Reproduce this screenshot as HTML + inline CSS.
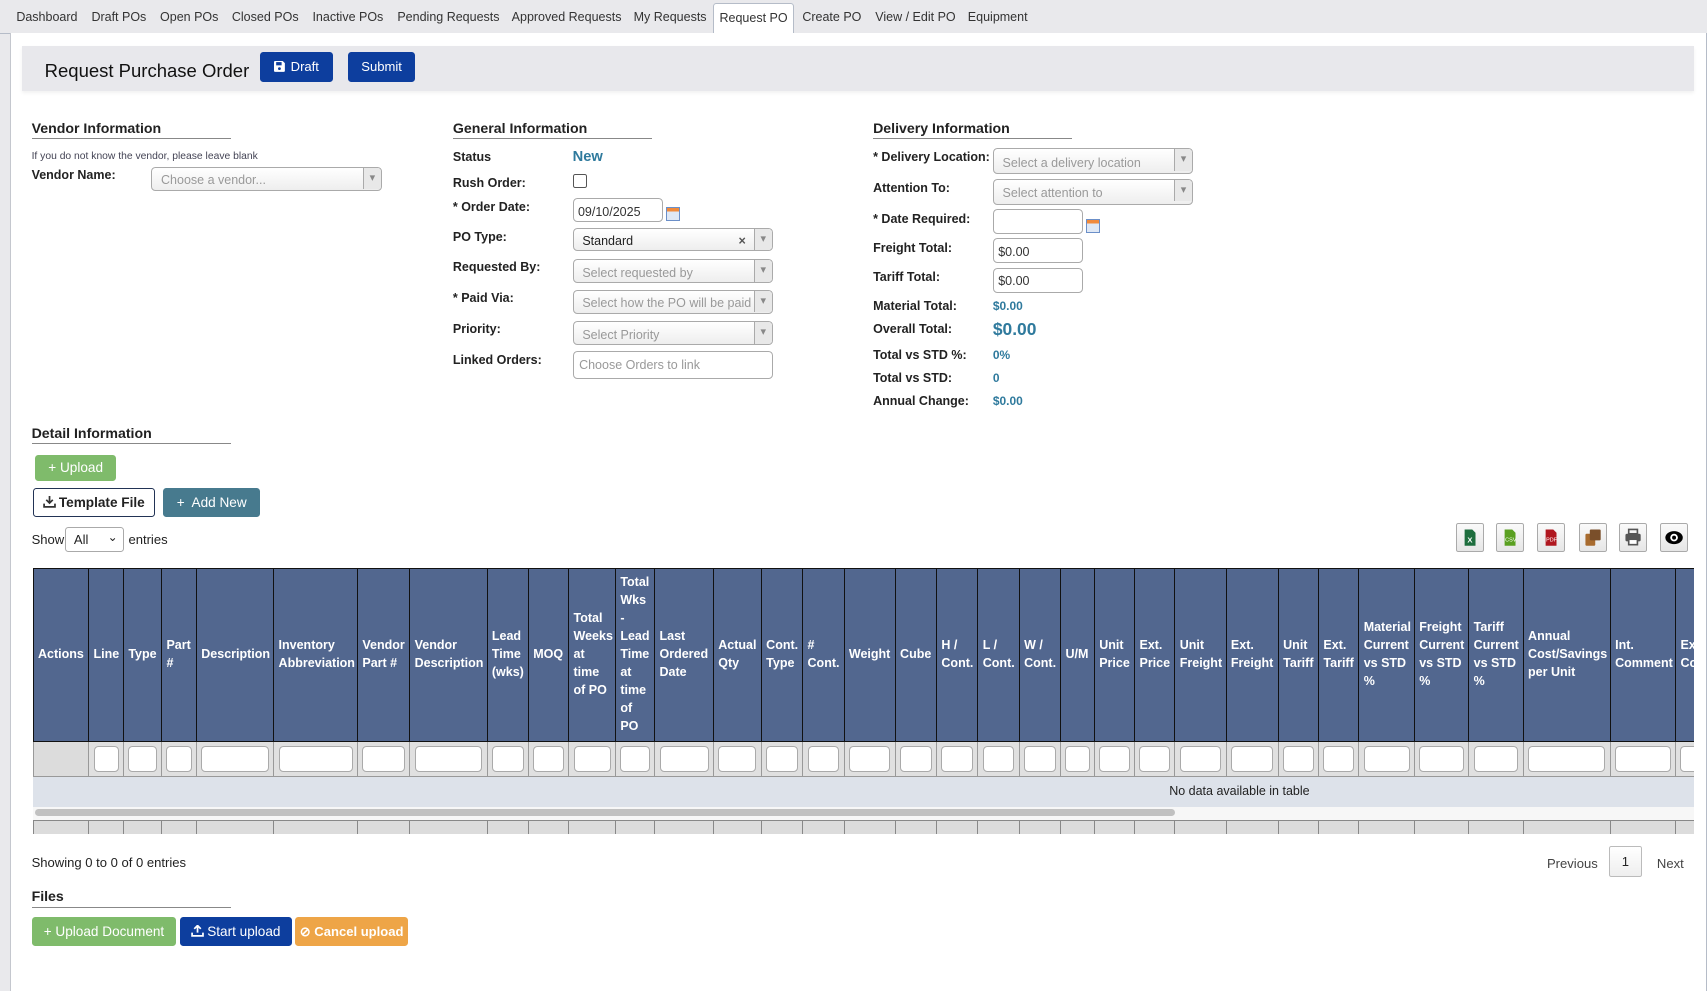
<!DOCTYPE html>
<html><head><meta charset="utf-8">
<style>
html{zoom:1.08865}
body{margin:0;width:1568px;height:900px;overflow:hidden;background:#e9e9ec;font-family:"Liberation Sans",Arial,sans-serif;font-size:12px;color:#222;position:relative}
.abs{position:absolute}
.tabs{position:absolute;left:0;top:0;height:30px;width:1568px;border-bottom:1px solid #b5bcc8}
.tab{position:absolute;top:9px;font-size:11.5px;color:#333}
.tab.act{top:3px;height:27px;background:#fff;border:1px solid #b5bcc8;border-bottom:none;padding:6px 5px 0;box-sizing:border-box;border-radius:3px 3px 0 0}
.panel{position:absolute;left:9px;top:30px;width:1557px;height:880px;background:#fff;border-left:1px solid #c4c7ce;border-right:1px solid #b5bcc8}
.hband{position:absolute;left:20px;top:42px;width:1536px;height:42px;background:#e8e8ec;box-shadow:0 2px 3px rgba(0,0,0,.06)}
.btn{position:absolute;color:#fff;font-size:12px;border-radius:3px;text-align:center;box-sizing:border-box}
.h{position:absolute;font-weight:bold;font-size:13px;color:#222;border-bottom:1px solid #888;padding-bottom:2px}
.lbl{position:absolute;font-weight:bold;font-size:11.5px;color:#222}
.sel{position:absolute;height:22px;border:1px solid #aaa;border-radius:4px;background:linear-gradient(#fff,#eee);box-sizing:border-box;color:#999;font-size:11.5px;padding:5px 8px;overflow:hidden;white-space:nowrap}
.sel:after{content:"▾";position:absolute;right:0;top:0;width:16px;height:20px;border-left:1px solid #aaa;background:#e8e8e8;color:#888;font-size:10px;text-align:center;line-height:20px}
.inp{position:absolute;height:22px;border:1px solid #aaa;border-radius:4px;box-sizing:border-box;font-size:11.5px;padding:5px 4px;color:#333;background:#fff}
.cal{position:absolute;width:11px;height:11px;border:1px solid #6b8fc8;background:linear-gradient(#f08a3c 0 3px,#dfe8f5 3px)}
.val{position:absolute;color:#2f7a9d;font-weight:bold;font-size:11px}
table{border-collapse:collapse;table-layout:fixed;width:1569px}
th{background:#52678f;color:#fff;font-size:11.5px;font-weight:bold;text-align:left;vertical-align:middle;border:1px solid #111;padding:0 4px;line-height:16.5px;height:158px;overflow:hidden}
td.f{background:#e0e0e0;border:1px solid #999;height:31px;padding:0 4px}
td.f div{height:22px;background:#fff;border:1px solid #aaa;border-radius:4px}
td.b{background:#dcdcdc;border:1px solid #888;height:10px}
.ico{position:absolute;top:480px;width:26px;height:27px;border:1px solid #aaa;border-radius:2px;background:linear-gradient(#fafafa,#e6e6e6);box-sizing:border-box}
</style></head><body>
<div class="tabs">
<span class="tab" style="left:15px">Dashboard</span>
<span class="tab" style="left:84px">Draft POs</span>
<span class="tab" style="left:147px">Open POs</span>
<span class="tab" style="left:213px">Closed POs</span>
<span class="tab" style="left:287px">Inactive POs</span>
<span class="tab" style="left:365px">Pending Requests</span>
<span class="tab" style="left:470px">Approved Requests</span>
<span class="tab" style="left:582px">My Requests</span>
<span class="tab act" style="left:655px">Request PO</span>
<span class="tab" style="left:737px">Create PO</span>
<span class="tab" style="left:804px">View / Edit PO</span>
<span class="tab" style="left:889px">Equipment</span>
</div>
<div class="panel"></div>
<div class="hband"></div>
<div class="abs" style="left:41px;top:55px;font-size:17px;color:#111">Request Purchase Order</div>
<div class="btn" style="left:239px;top:48px;width:67px;height:27px;background:#0d3e9e;line-height:27px"><svg width="10" height="10" viewBox="0 0 10 10" style="vertical-align:-1px;margin-right:5px"><path d="M0 1a1 1 0 0 1 1-1h7l2 2v7a1 1 0 0 1-1 1H1a1 1 0 0 1-1-1z" fill="#fff"/><rect x="2" y="1" width="5" height="3" fill="#0d3e9e"/><circle cx="5" cy="7" r="1.3" fill="#0d3e9e"/></svg>Draft</div>
<div class="btn" style="left:320px;top:48px;width:61px;height:27px;background:#0d3e9e;line-height:27px">Submit</div>

<div class="h" style="left:29px;top:110px;width:183px">Vendor Information</div>
<div class="abs" style="left:29px;top:139px;font-size:9.5px;color:#445">If you do not know the vendor, please leave blank</div>
<div class="lbl" style="left:29px;top:154px">Vendor Name:</div>
<div class="sel" style="left:139px;top:153px;width:212px">Choose a vendor...</div>

<div class="h" style="left:416px;top:110px;width:183px">General Information</div>
<div class="lbl" style="left:416px;top:138px">Status</div>
<div class="abs" style="left:526px;top:137px;color:#2f7a9d;font-weight:bold;font-size:13.5px">New</div>
<div class="lbl" style="left:416px;top:162px">Rush Order:</div>
<div class="abs" style="left:526px;top:160px;width:11px;height:11px;border:1px solid #555;border-radius:2px"></div>
<div class="lbl" style="left:416px;top:184px">* Order Date:</div>
<div class="inp" style="left:526px;top:182px;width:83px">09/10/2025</div>
<div class="cal" style="left:612px;top:190px"></div>
<div class="lbl" style="left:416px;top:211px">PO Type:</div>
<div class="sel" style="left:526px;top:209px;width:184px;color:#222">Standard<span style="position:absolute;right:24px;color:#555;font-weight:bold">×</span></div>
<div class="lbl" style="left:416px;top:239px">Requested By:</div>
<div class="sel" style="left:526px;top:238px;width:184px">Select requested by</div>
<div class="lbl" style="left:416px;top:267px">* Paid Via:</div>
<div class="sel" style="left:526px;top:266px;width:184px">Select how the PO will be paid</div>
<div class="lbl" style="left:416px;top:296px">Priority:</div>
<div class="sel" style="left:526px;top:295px;width:184px">Select Priority</div>
<div class="lbl" style="left:416px;top:324px">Linked Orders:</div>
<div class="inp" style="left:526px;top:322px;width:184px;height:26px;color:#999;padding:6px 5px">Choose Orders to link</div>

<div class="h" style="left:802px;top:110px;width:183px">Delivery Information</div>
<div class="lbl" style="left:802px;top:138px">* Delivery Location:</div>
<div class="sel" style="left:912px;top:136px;width:184px;height:24px;padding-top:6px">Select a delivery location</div>
<div class="lbl" style="left:802px;top:166px">Attention To:</div>
<div class="sel" style="left:912px;top:164px;width:184px;height:24px;padding-top:6px">Select attention to</div>
<div class="lbl" style="left:802px;top:195px">* Date Required:</div>
<div class="inp" style="left:912px;top:192px;width:83px;height:23px"></div>
<div class="cal" style="left:998px;top:201px"></div>
<div class="lbl" style="left:802px;top:221px">Freight Total:</div>
<div class="inp" style="left:912px;top:219px;width:83px;height:23px">$0.00</div>
<div class="lbl" style="left:802px;top:248px">Tariff Total:</div>
<div class="inp" style="left:912px;top:246px;width:83px;height:23px">$0.00</div>
<div class="lbl" style="left:802px;top:275px">Material Total:</div>
<div class="val" style="left:912px;top:275px">$0.00</div>
<div class="lbl" style="left:802px;top:296px">Overall Total:</div>
<div class="val" style="left:912px;top:293px;font-size:16px">$0.00</div>
<div class="lbl" style="left:802px;top:320px">Total vs STD %:</div>
<div class="val" style="left:912px;top:320px">0%</div>
<div class="lbl" style="left:802px;top:341px">Total vs STD:</div>
<div class="val" style="left:912px;top:341px">0</div>
<div class="lbl" style="left:802px;top:362px">Annual Change:</div>
<div class="val" style="left:912px;top:362px">$0.00</div>

<div class="h" style="left:29px;top:390px;width:183px">Detail Information</div>
<div class="btn" style="left:32px;top:418px;width:75px;height:24px;background:#7fbb6b;line-height:24px;font-size:12.5px">+ Upload</div>
<div class="btn" style="left:30px;top:448px;width:112px;height:27px;background:#fff;color:#222;border:1px solid #223355;line-height:25px;font-weight:bold;font-size:12.5px"><svg width="12" height="11" viewBox="0 0 12 11" style="vertical-align:-1px;margin-right:3px"><path d="M6 0v6M3 3.5l3 3 3-3M1 7v3h10V7" stroke="#333" stroke-width="1.6" fill="none"/></svg>Template File</div>
<div class="btn" style="left:150px;top:448px;width:89px;height:27px;background:#477a8e;line-height:27px;font-size:12.5px">+&nbsp; Add New</div>
<div class="abs" style="left:29px;top:489px">Show</div>
<div class="abs" style="left:60px;top:484px;width:54px;height:23px;border:1px solid #aaa;border-radius:3px;box-sizing:border-box;padding:4px 7px">All<span style="position:absolute;right:5px;top:2px;font-size:11px">⌄</span></div>
<div class="abs" style="left:118px;top:489px">entries</div>

<div class="ico" style="left:1337px"><svg width="24" height="25"><path d="M7 5h7l3 3v12H7z" fill="#1e6e3e"/><text x="9.5" y="17" font-size="7" fill="#fff" font-family="Liberation Sans" font-weight="bold">X</text></svg></div>
<div class="ico" style="left:1374px"><svg width="24" height="25"><path d="M7 5h7l3 3v12H7z" fill="#5aa021"/><text x="7.5" y="16" font-size="5" fill="#fff" font-family="Liberation Sans">CSV</text></svg></div>
<div class="ico" style="left:1412px"><svg width="24" height="25"><path d="M7 5h7l3 3v12H7z" fill="#b0171f"/><text x="7.5" y="16" font-size="5" fill="#fff" font-family="Liberation Sans">PDF</text></svg></div>
<div class="ico" style="left:1450px"><svg width="24" height="25"><rect x="5" y="9" width="9" height="11" rx="1" fill="#a86b2e"/><rect x="9" y="5" width="10" height="10" rx="1" fill="#7a4f2a"/></svg></div>
<div class="ico" style="left:1487px"><svg width="24" height="25"><rect x="8" y="5" width="8" height="4" fill="none" stroke="#555" stroke-width="1.5"/><rect x="5" y="9" width="14" height="7" rx="1.5" fill="#555"/><rect x="8" y="14" width="8" height="5" fill="#fff" stroke="#555" stroke-width="1.5"/></svg></div>
<div class="ico" style="left:1525px"><svg width="24" height="25"><ellipse cx="12" cy="12.5" rx="8" ry="6" fill="#000"/><circle cx="12" cy="12.5" r="3.5" fill="#fff"/><circle cx="12" cy="12.5" r="1.8" fill="#000"/></svg></div>

<div class="abs" style="left:30px;top:522px;width:1526px;height:244px;overflow:hidden">
<table>
<colgroup>
<col style="width:51px"><col style="width:32px"><col style="width:35px"><col style="width:32px"><col style="width:71px"><col style="width:77px"><col style="width:48px"><col style="width:71px"><col style="width:38px"><col style="width:37px"><col style="width:43px"><col style="width:36px"><col style="width:54px"><col style="width:44px"><col style="width:38px"><col style="width:38px"><col style="width:47px"><col style="width:38px"><col style="width:38px"><col style="width:38px"><col style="width:38px"><col style="width:31px"><col style="width:37px"><col style="width:37px"><col style="width:47px"><col style="width:48px"><col style="width:37px"><col style="width:37px"><col style="width:51px"><col style="width:50px"><col style="width:50px"><col style="width:80px"><col style="width:60px"><col style="width:60px">
</colgroup>
<tr><th>Actions</th><th>Line</th><th>Type</th><th>Part #</th><th>Description</th><th>Inventory Abbreviation</th><th>Vendor Part #</th><th>Vendor Description</th><th>Lead Time (wks)</th><th>MOQ</th><th>Total Weeks at time of PO</th><th>Total Wks - Lead Time at time of PO</th><th>Last Ordered Date</th><th>Actual Qty</th><th>Cont. Type</th><th># Cont.</th><th>Weight</th><th>Cube</th><th>H / Cont.</th><th>L / Cont.</th><th>W / Cont.</th><th>U/M</th><th>Unit Price</th><th>Ext. Price</th><th>Unit Freight</th><th>Ext. Freight</th><th>Unit Tariff</th><th>Ext. Tariff</th><th>Material Current vs STD %</th><th>Freight Current vs STD %</th><th>Tariff Current vs STD %</th><th>Annual Cost/Savings per Unit</th><th>Int. Comment</th><th>Ext. Comment</th></tr>
<tr><td class="f" style="background:#dcdcdc"></td><td class="f"><div></div></td><td class="f"><div></div></td><td class="f"><div></div></td><td class="f"><div></div></td><td class="f"><div></div></td><td class="f"><div></div></td><td class="f"><div></div></td><td class="f"><div></div></td><td class="f"><div></div></td><td class="f"><div></div></td><td class="f"><div></div></td><td class="f"><div></div></td><td class="f"><div></div></td><td class="f"><div></div></td><td class="f"><div></div></td><td class="f"><div></div></td><td class="f"><div></div></td><td class="f"><div></div></td><td class="f"><div></div></td><td class="f"><div></div></td><td class="f"><div></div></td><td class="f"><div></div></td><td class="f"><div></div></td><td class="f"><div></div></td><td class="f"><div></div></td><td class="f"><div></div></td><td class="f"><div></div></td><td class="f"><div></div></td><td class="f"><div></div></td><td class="f"><div></div></td><td class="f"><div></div></td><td class="f"><div></div></td><td class="f"><div></div></td></tr>
</table>
<div style="position:absolute;left:0;top:192px;width:1526px;height:27px;background:#dde2ea;line-height:27px;font-size:11.5px"><span style="position:absolute;left:1044px">No data available in table</span></div>
<div style="position:absolute;left:0;top:219px;width:1526px;height:12px;background:#f7f7f7"><div style="position:absolute;left:2px;top:2px;width:1047px;height:7px;background:#c1c1c1;border-radius:4px"></div></div>
<table style="position:absolute;left:0;top:231px">
<colgroup>
<col style="width:51px"><col style="width:32px"><col style="width:35px"><col style="width:32px"><col style="width:71px"><col style="width:77px"><col style="width:48px"><col style="width:71px"><col style="width:38px"><col style="width:37px"><col style="width:43px"><col style="width:36px"><col style="width:54px"><col style="width:44px"><col style="width:38px"><col style="width:38px"><col style="width:47px"><col style="width:38px"><col style="width:38px"><col style="width:38px"><col style="width:38px"><col style="width:31px"><col style="width:37px"><col style="width:37px"><col style="width:47px"><col style="width:48px"><col style="width:37px"><col style="width:37px"><col style="width:51px"><col style="width:50px"><col style="width:50px"><col style="width:80px"><col style="width:60px"><col style="width:60px">
</colgroup>
<tr><td class="b"></td><td class="b"></td><td class="b"></td><td class="b"></td><td class="b"></td><td class="b"></td><td class="b"></td><td class="b"></td><td class="b"></td><td class="b"></td><td class="b"></td><td class="b"></td><td class="b"></td><td class="b"></td><td class="b"></td><td class="b"></td><td class="b"></td><td class="b"></td><td class="b"></td><td class="b"></td><td class="b"></td><td class="b"></td><td class="b"></td><td class="b"></td><td class="b"></td><td class="b"></td><td class="b"></td><td class="b"></td><td class="b"></td><td class="b"></td><td class="b"></td><td class="b"></td><td class="b"></td><td class="b"></td></tr>
</table>
</div>

<div class="abs" style="left:29px;top:785px">Showing 0 to 0 of 0 entries</div>
<div class="abs" style="left:1421px;top:786px;color:#444">Previous</div>
<div class="abs" style="left:1478px;top:777px;width:30px;height:29px;border:1px solid #bbb;border-radius:2px;background:linear-gradient(#fff,#eee);box-sizing:border-box;text-align:center;line-height:27px">1</div>
<div class="abs" style="left:1522px;top:786px;color:#444">Next</div>

<div class="h" style="left:29px;top:816px;width:183px">Files</div>
<div class="btn" style="left:29px;top:842px;width:133px;height:27px;background:#7fbb6b;line-height:27px;font-size:12.5px">+ Upload Document</div>
<div class="btn" style="left:165px;top:842px;width:103px;height:27px;background:#0d3e9e;line-height:27px;font-size:12.5px"><svg width="12" height="11" viewBox="0 0 12 11" style="vertical-align:-1px;margin-right:3px"><path d="M6 7V1M3 3.5l3-3 3 3M1 7v3h10V7" stroke="#fff" stroke-width="1.6" fill="none"/></svg>Start upload</div>
<div class="btn" style="left:271px;top:842px;width:104px;height:27px;background:#eea547;line-height:27px;font-size:12px;font-weight:bold">⊘ Cancel upload</div>
</body></html>
